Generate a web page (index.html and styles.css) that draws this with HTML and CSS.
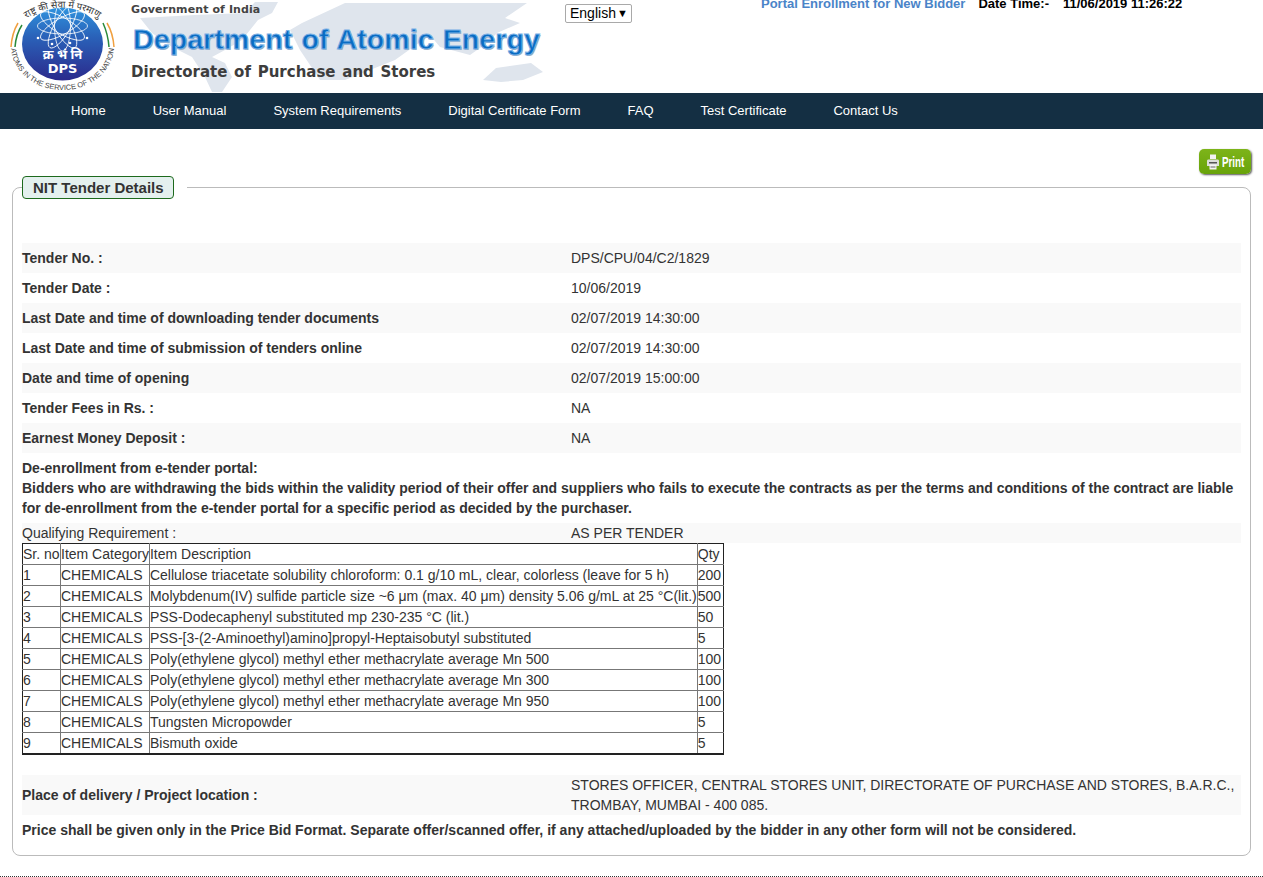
FILE: index.html
```html
<!DOCTYPE html>
<html lang="en">
<head>
<meta charset="utf-8">
<title>NIT Tender Details</title>
<link rel="stylesheet" href="styles.css">
</head>
<body>
<header class="top">
  <svg class="logo" viewBox="0 0 106 93" width="106" height="93" aria-label="DPS logo">
    <defs>
      <linearGradient id="globe" x1="0" y1="0" x2="0" y2="1">
        <stop offset="0" stop-color="#2f93de"/>
        <stop offset="0.4" stop-color="#2a62b9"/>
        <stop offset="1" stop-color="#2b2a8c"/>
      </linearGradient>
      <path id="arcTop" d="M8 26 A52 38 0 0 1 97 26"/>
      <path id="arcBottom" d="M1 46 A51.500 44 0 0 0 104 46"/>
    </defs>
    <ellipse cx="52.500" cy="44" rx="40.500" ry="36.500" fill="url(#globe)"/>
    <g fill="none" stroke="#fff" stroke-width="0.800">
      <ellipse cx="52.500" cy="26" rx="25" ry="8"/>
      <ellipse cx="52.500" cy="26" rx="25" ry="8" transform="rotate(30 52.500 26)"/>
      <ellipse cx="52.500" cy="26" rx="25" ry="8" transform="rotate(60 52.500 26)"/>
      <ellipse cx="52.500" cy="26" rx="25" ry="8" transform="rotate(90 52.500 26)"/>
      <ellipse cx="52.500" cy="26" rx="25" ry="8" transform="rotate(120 52.500 26)"/>
      <ellipse cx="52.500" cy="26" rx="25" ry="8" transform="rotate(150 52.500 26)"/>
    </g>
    <g fill="#fff">
      <circle cx="28" cy="38" r="1.300"/><circle cx="42" cy="44" r="1.300"/><circle cx="60" cy="43" r="1.300"/><circle cx="77" cy="38" r="1.300"/>
    </g>
    <text class="logo-hi" x="52.500" y="59" text-anchor="middle">क्र भं नि</text>
    <text class="logo-dps" x="52.500" y="73" text-anchor="middle">DPS</text>
    <path d="M1 47 Q2 33 8 23" fill="none" stroke="#f0a040" stroke-width="1.500"/>
    <path d="M5 47 Q6 34 12 25" fill="none" stroke="#2a8a3a" stroke-width="1.500"/>
    <path d="M93 23 Q98 34 99 47" fill="none" stroke="#2a8a3a" stroke-width="1.500"/>
    <path d="M97 23 Q103 33 104 47" fill="none" stroke="#f0a040" stroke-width="1.500"/>
    <text class="logo-ring" text-anchor="middle"><textPath href="#arcTop" startOffset="50%">राष्ट्र की सेवा में परमाणु</textPath></text>
    <text class="logo-ring-en" text-anchor="middle"><textPath href="#arcBottom" startOffset="50%">ATOMS IN THE SERVICE OF THE NATION</textPath></text>
  </svg>
  <div class="banner">
    <svg class="map" viewBox="0 0 440 93" width="440" height="93" aria-hidden="true">
      <path fill="#dfe5ed" d="M19 18 L74 15 L124 13 L134 2 L157 2 L151 13 L137 20 L121 40 L104 50 L91 57 L104 63 L111 77 L101 92 L91 92 L84 77 L71 57 L51 47 L31 33 Z"/>
      <path fill="#dfe5ed" d="M181 23 L224 3 L406 3 L384 18 L399 23 L376 33 L366 43 L349 55 L319 47 L309 35 L274 60 L224 80 L199 80 L179 50 L169 30 Z"/>
      <path fill="#dfe5ed" d="M362 80 L375 68 L410 63 L422 72 L402 80 L380 82 Z"/>
    </svg>
    <div class="gov">Government of India</div>
    <div class="dept">Department of Atomic Energy</div>
    <div class="dir">Directorate of Purchase and Stores</div>
  </div>
  <div class="lang"><span>English</span><span class="caret">▼</span></div>
  <div class="status">
    <a class="enroll" href="#">Portal Enrollment for New Bidder</a>
    <span class="dt-label">Date Time:-</span>
    <span class="dt-value">11/06/2019 11:26:22</span>
  </div>
</header>
<nav class="nav">
  <a href="#">Home</a>
  <a href="#">User Manual</a>
  <a href="#">System Requirements</a>
  <a href="#">Digital Certificate Form</a>
  <a href="#">FAQ</a>
  <a href="#">Test Certificate</a>
  <a href="#">Contact Us</a>
</nav>
<main class="main">
  <div class="actions">
    <button class="print" type="button">
      <svg viewBox="0 0 12 16" width="12" height="16" aria-hidden="true">
        <path fill="#f2f2f2" d="M3 0.500 H9 V5 H3 Z"/>
        <path fill="#dcdedb" d="M1 5.500 H11 Q12 5.500 12 7 V12 H0 V7 Q0 5.500 1 5.500 Z"/>
        <path fill="#555" d="M2 8 H10 V9.500 H2 Z"/>
        <path fill="#f4f4f4" d="M2.500 10.500 H9.500 V15.500 H2.500 Z"/>
        <path fill="#666" d="M3.500 12.500 H8.500 V13.500 H3.500 Z"/>
      </svg>
      <span class="print-label">Print</span>
    </button>
  </div>
  <fieldset class="box">
    <legend class="box-legend"><span class="box-title">NIT Tender Details</span></legend>
    <div class="row"><div class="label">Tender No. :</div><div>DPS/CPU/04/C2/1829</div></div>
    <div class="row"><div class="label">Tender Date :</div><div>10/06/2019</div></div>
    <div class="row"><div class="label">Last Date and time of downloading tender documents</div><div>02/07/2019 14:30:00</div></div>
    <div class="row"><div class="label">Last Date and time of submission of tenders online</div><div>02/07/2019 14:30:00</div></div>
    <div class="row"><div class="label">Date and time of opening</div><div>02/07/2019 15:00:00</div></div>
    <div class="row"><div class="label">Tender Fees in Rs. :</div><div>NA</div></div>
    <div class="row"><div class="label">Earnest Money Deposit :</div><div>NA</div></div>
    <p class="notice">De-enrollment from e-tender portal:<br>Bidders who are withdrawing the bids within the validity period of their offer and suppliers who fails to execute the contracts as per the terms and conditions of the contract are liable for de-enrollment from the e-tender portal for a specific period as decided by the purchaser.</p>
    <div class="row row-qual"><div>Qualifying Requirement :</div><div>AS PER TENDER</div></div>
    <table class="items">
      <thead>
        <tr><td>Sr. no</td><td>Item Category</td><td>Item Description</td><td>Qty</td></tr>
      </thead>
      <tbody>
        <tr><td>1</td><td>CHEMICALS</td><td>Cellulose triacetate solubility chloroform: 0.1 g/10 mL, clear, colorless (leave for 5 h)</td><td>200</td></tr>
        <tr><td>2</td><td>CHEMICALS</td><td>Molybdenum(IV) sulfide particle size ~6 μm (max. 40 μm) density 5.06 g/mL at 25 °C(lit.)</td><td>500</td></tr>
        <tr><td>3</td><td>CHEMICALS</td><td>PSS-Dodecaphenyl substituted mp 230-235 °C (lit.)</td><td>50</td></tr>
        <tr><td>4</td><td>CHEMICALS</td><td>PSS-[3-(2-Aminoethyl)amino]propyl-Heptaisobutyl substituted</td><td>5</td></tr>
        <tr><td>5</td><td>CHEMICALS</td><td>Poly(ethylene glycol) methyl ether methacrylate average Mn 500</td><td>100</td></tr>
        <tr><td>6</td><td>CHEMICALS</td><td>Poly(ethylene glycol) methyl ether methacrylate average Mn 300</td><td>100</td></tr>
        <tr><td>7</td><td>CHEMICALS</td><td>Poly(ethylene glycol) methyl ether methacrylate average Mn 950</td><td>100</td></tr>
        <tr><td>8</td><td>CHEMICALS</td><td>Tungsten Micropowder</td><td>5</td></tr>
        <tr><td>9</td><td>CHEMICALS</td><td>Bismuth oxide</td><td>5</td></tr>
      </tbody>
    </table>
    <div class="row row-place"><div class="label">Place of delivery / Project location :</div><div>STORES OFFICER, CENTRAL STORES UNIT, DIRECTORATE OF PURCHASE AND STORES, B.A.R.C., TROMBAY, MUMBAI - 400 085.</div></div>
    <p class="price">Price shall be given only in the Price Bid Format. Separate offer/scanned offer, if any attached/uploaded by the bidder in any other form will not be considered.</p>
  </fieldset>
</main>
<div class="rule"></div>
</body>
</html>
```

FILE: styles.css
```css
* { box-sizing: border-box; }
html, body { margin: 0; padding: 0; }
body {
  height: 877px;
  overflow: hidden;
  background: #fff;
  color: #333;
  font-family: "Liberation Sans", Arial, sans-serif;
  font-size: 14px;
}
.top {
  height: 93px;
  display: flex;
  align-items: flex-start;
  overflow: hidden;
}
.logo { flex: none; margin-left: 10px; }
.logo-hi { font: bold 13px "Noto Sans", "DejaVu Sans", sans-serif; fill: #fff; }
.logo-dps { font: bold 13px "DejaVu Sans", sans-serif; fill: #fff; }
.logo-ring { font: 9.500px "Noto Sans", "DejaVu Sans", sans-serif; fill: #333; }
.logo-ring-en { font: 7.400px "Liberation Sans", sans-serif; fill: #444; }
.banner {
  position: relative;
  flex: none;
  width: 434px;
  height: 93px;
  margin-left: 15px;
}
.map { position: absolute; left: -10px; top: 0; }
.gov, .dept, .dir { position: relative; white-space: nowrap; }
.gov {
  margin-top: 3px;
  font: bold 11px/14px "DejaVu Sans", sans-serif;
  color: #444;
  letter-spacing: 0.100px;
}
.dept {
  margin: 6px 0 0 2px;
  font: bold 28.500px/32px "Liberation Sans", sans-serif;
  color: #0a6cc2;
  -webkit-text-stroke: 1px #79b0e6;
  text-shadow: 1px 1px 0 #a4b2c2;
  letter-spacing: 0.100px;
  word-spacing: 1px;
}
.dir {
  margin-top: 7px;
  font: bold 15px/20px "DejaVu Sans", sans-serif;
  color: #3d3d3d;
  word-spacing: 1.500px;
}
.lang {
  flex: none;
  width: 67px;
  height: 19px;
  margin: 4px 0 0 0;
  padding-left: 4px;
  display: flex;
  align-items: center;
  gap: 1px;
  border: 1px solid #a9a9a9;
  border-radius: 2px;
  color: #000;
  line-height: 17px;
}
.caret { font-size: 11px; }
.status {
  flex: none;
  margin: -4px 0 0 129px;
  display: flex;
  font-size: 13px;
  font-weight: bold;
  line-height: 15px;
  white-space: nowrap;
}
.enroll { color: #4a84c8; text-decoration: none; }
.dt-label { margin-left: 13px; color: #000; }
.dt-value { margin-left: 14px; color: #000; }
.nav {
  height: 36px;
  padding-left: 71px;
  display: flex;
  align-items: center;
  gap: 47px;
  background: #142f43;
  font-size: 13px;
}
.nav a { color: #fff; text-decoration: none; line-height: 16px; }
.main { padding: 20px 12px 0; }
.actions { display: flex; justify-content: flex-end; height: 25px; }
.print {
  width: 52px;
  height: 25px;
  padding: 0 0 0 8px;
  display: flex;
  align-items: center;
  gap: 3px;
  border: 0;
  border-radius: 5px;
  background: linear-gradient(#7db41a, #68a30a);
  box-shadow: 1px 1px 2px #555;
  color: #fff;
  font: bold 14px "Liberation Sans", sans-serif;
}
.print-label {
  display: block;
  width: 22px;
  transform: scaleX(0.700);
  transform-origin: left center;
}
.box {
  height: 680px;
  margin: 2px 0 0;
  padding: 44px 9px 0;
  min-width: 0;
  border: 1px solid #bbb;
  border-radius: 8px;
}
.box-legend { margin-left: 0; padding: 0 13px 0 0; }
.box-title {
  display: block;
  height: 23px;
  padding: 0 9.500px 0 10px;
  border: 1px solid #1d6a1d;
  border-radius: 4px;
  background: #e4f0ee;
  color: #333;
  font-size: 15px;
  font-weight: bold;
  line-height: 21px;
}
.row {
  display: grid;
  grid-template-columns: 549px 1fr;
  align-items: center;
  height: 30px;
}
.row:nth-of-type(odd) { background: #f9f9f9; }
.label { font-weight: bold; }
.notice {
  margin: 5px 0;
  font-weight: bold;
  line-height: 20px;
}
.row.row-qual { height: 20px; background: #f9f9f9; }
.items {
  border-collapse: collapse;
  border: 1px solid #222;
  border-bottom-width: 2px;
  line-height: 16px;
}
.items td {
  height: 21px;
  padding: 1px 0;
  border: 1px solid #777;
  white-space: nowrap;
}
.items thead td { border-top-color: #222; }
.items td:first-child { border-left-color: #222; width: 38px; }
.items td:last-child { border-right-color: #222; padding-right: 2px; }
.row.row-place {
  height: 40px;
  margin-top: 20px;
  background: #f9f9f9;
  line-height: 20px;
}
.price {
  margin: 5px 0 0;
  font-weight: bold;
  line-height: 20px;
}
.rule {
  margin-top: 20px;
  border-top: 1px dotted #333;
}
```
